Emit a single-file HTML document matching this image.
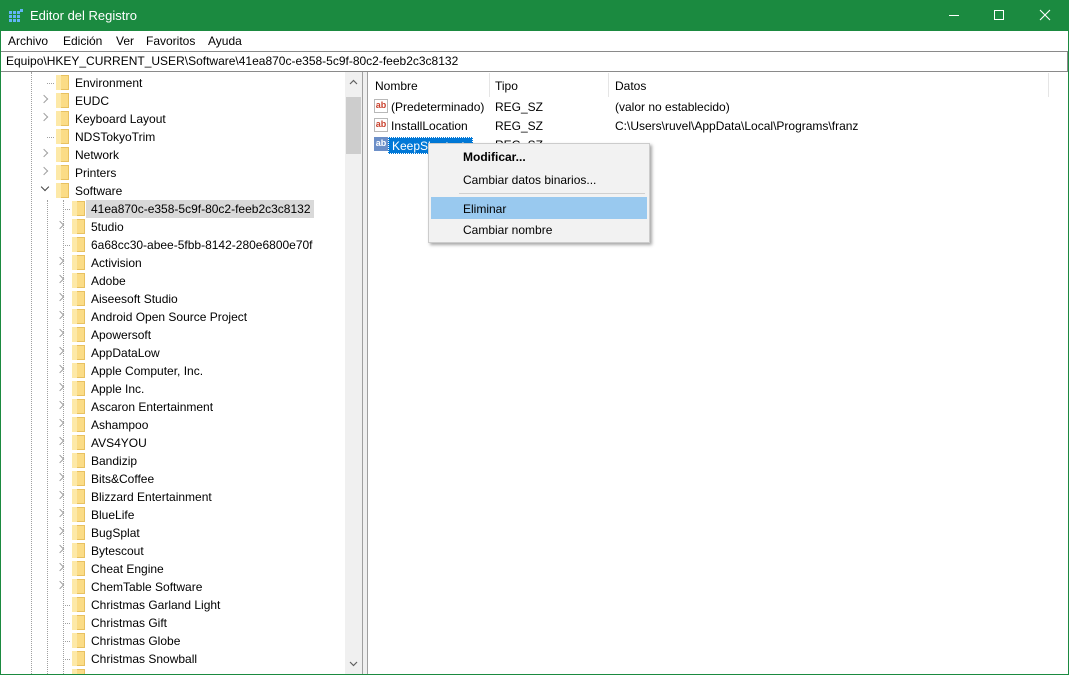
<!DOCTYPE html>
<html><head><meta charset="utf-8"><style>
*{margin:0;padding:0;box-sizing:border-box}
body{width:1069px;height:675px;overflow:hidden;background:#fff;font-family:"Liberation Sans",sans-serif;font-size:12px;color:#000;position:relative}
.abs{position:absolute}
#title{left:0;top:0;width:1069px;height:31px;background:#1b8a40;color:#fff;font-size:13px}
#menu{left:1px;top:31px;width:1067px;height:20px;background:#fff}
#menu span{position:absolute;top:3px}
#addr{left:1px;top:51px;width:1067px;height:21px;border:1px solid #8a8a8a;border-left:none;background:#fff;padding:2px 0 0 5px}
.row{position:absolute;height:18px;line-height:18px;white-space:nowrap}
.fold{position:absolute;width:13px;height:15px;background:#fbdc86;border:1px solid #e8c160;top:1px}
.fold:before{content:"";position:absolute;left:-1px;top:-1px;width:5px;height:15px;background:#fde9a8}
.arr{position:absolute;top:4px;width:6px;height:6px;border-right:1.3px solid #a0a0a0;border-bottom:1.3px solid #a0a0a0;transform:rotate(-45deg)}
.dn{transform:rotate(45deg);top:2px;border-color:#444}
.vd{position:absolute;width:0;border-left:1px dotted #a0a0a0}
.hd{position:absolute;height:0;width:7px;border-top:1px dotted #a0a0a0;top:9px}
.ab{position:absolute;width:14px;height:14px;border:1px solid #b8b8b8;background:#fff;color:#c8402c;font-size:9px;font-weight:bold;line-height:11px;text-align:center}
</style></head><body>
<div id="title" class="abs">
 <svg class="abs" style="left:9px;top:9px" width="14" height="14"><g fill="#62b5f6"><rect x="0" y="2" width="3" height="3"/><rect x="4" y="2" width="3" height="3"/><rect x="8" y="2" width="3" height="3"/><rect x="0" y="6" width="3" height="3"/><rect x="4" y="6" width="3" height="3"/><rect x="8" y="6" width="3" height="3"/><rect x="0" y="10" width="3" height="3"/><rect x="4" y="10" width="3" height="3"/><rect x="8" y="10" width="3" height="3"/><rect x="11" y="0" width="3" height="3"/></g></svg>
 <span class="abs" style="left:30px;top:8px">Editor del Registro</span>
 <div class="abs" style="left:949px;top:15px;width:10px;height:1px;background:#fff"></div>
 <div class="abs" style="left:994px;top:10px;width:10px;height:10px;border:1px solid #fff"></div>
 <svg class="abs" style="left:1039px;top:9px" width="12" height="12"><path d="M1 1L11 11M11 1L1 11" stroke="#fff" stroke-width="1.1"/></svg>
</div>
<div class="abs" style="left:0;top:31px;width:1px;height:644px;background:#1b8a40"></div>
<div class="abs" style="left:1068px;top:31px;width:1px;height:644px;background:#1b8a40"></div>
<div class="abs" style="left:0;top:674px;width:1069px;height:1px;background:#1b8a40"></div>
<div id="menu" class="abs"><span style="left:7px">Archivo</span><span style="left:62px">Edición</span><span style="left:115px">Ver</span><span style="left:145px">Favoritos</span><span style="left:207px">Ayuda</span></div>
<div id="addr" class="abs">Equipo\HKEY_CURRENT_USER\Software\41ea870c-e358-5c9f-80c2-feeb2c3c8132</div>

<div class="abs" style="left:1px;top:72px;width:344px;height:602px;overflow:hidden">
<div class="vd" style="left:30px;top:0;height:602px"></div>
<div class="vd" style="left:46px;top:128px;height:474px"></div>
<div class="vd" style="left:62px;top:128px;height:474px"></div>
</div>
<div id="tree" class="abs" style="left:0;top:74px;width:345px;height:600px;overflow:hidden"></div>

<div class="abs" style="left:345px;top:72px;width:17px;height:602px;background:#f0f0f0"></div>
<svg class="abs" style="left:349px;top:79px" width="9" height="6"><path d="M1 5L4.5 1.5L8 5" stroke="#606060" fill="none" stroke-width="1.2"/></svg>
<div class="abs" style="left:346px;top:97px;width:15px;height:57px;background:#cdcdcd"></div>
<svg class="abs" style="left:349px;top:661px" width="9" height="6"><path d="M1 1L4.5 4.5L8 1" stroke="#606060" fill="none" stroke-width="1.2"/></svg>
<div class="abs" style="left:362px;top:72px;width:6px;height:602px;background:#f0f0f0;border-left:1px solid #a0a0a0;border-right:1px solid #a0a0a0"></div>

<span class="abs" style="left:375px;top:79px">Nombre</span>
<span class="abs" style="left:495px;top:79px">Tipo</span>
<span class="abs" style="left:615px;top:79px">Datos</span>
<div class="abs" style="left:489px;top:73px;width:1px;height:24px;background:#e5e5e5"></div>
<div class="abs" style="left:608px;top:73px;width:1px;height:24px;background:#e5e5e5"></div>
<div class="abs" style="left:1048px;top:73px;width:1px;height:24px;background:#e5e5e5"></div>

<div class="ab" style="left:374px;top:99px">ab</div>
<span class="abs" style="left:391px;top:100px">(Predeterminado)</span><span class="abs" style="left:495px;top:100px">REG_SZ</span><span class="abs" style="left:615px;top:100px">(valor no establecido)</span>
<div class="ab" style="left:374px;top:118px">ab</div>
<span class="abs" style="left:391px;top:119px">InstallLocation</span><span class="abs" style="left:495px;top:119px">REG_SZ</span><span class="abs" style="left:615px;top:119px">C:\Users\ruvel\AppData\Local\Programs\franz</span>
<div class="ab" style="left:374px;top:137px;color:#fff;background:#6c8fc8;border-color:#6c8fc8">ab</div>
<div class="abs" style="left:388px;top:137px;width:85px;height:17px;background:#0078d7;color:#fff;padding:1px 0 0 3px;border:1px dotted #fff">KeepShortcuts</div>
<span class="abs" style="left:495px;top:138px">REG_SZ</span>

<div class="abs" style="left:428px;top:143px;width:222px;height:100px;background:#f2f2f2;border:1px solid #ccc;box-shadow:2px 2px 3px rgba(0,0,0,.35)">
 <span class="abs" style="left:34px;top:6px;font-weight:bold">Modificar...</span>
 <span class="abs" style="left:34px;top:29px">Cambiar datos binarios...</span>
 <div class="abs" style="left:30px;top:49px;width:186px;height:1px;background:#d0d0d0"></div>
 <div class="abs" style="left:2px;top:53px;width:216px;height:22px;background:#99c9ef"></div>
 <span class="abs" style="left:34px;top:58px">Eliminar</span>
 <span class="abs" style="left:34px;top:79px">Cambiar nombre</span>
</div>

<script>
var items=[["Environment",1,0],["EUDC",1,1],["Keyboard Layout",1,1],["NDSTokyoTrim",1,0],["Network",1,1],["Printers",1,1],["Software",1,2],
["41ea870c-e358-5c9f-80c2-feeb2c3c8132",2,0],["5tudio",2,1],["6a68cc30-abee-5fbb-8142-280e6800e70f",2,0],["Activision",2,1],["Adobe",2,1],["Aiseesoft Studio",2,1],["Android Open Source Project",2,1],["Apowersoft",2,1],["AppDataLow",2,1],["Apple Computer, Inc.",2,1],["Apple Inc.",2,1],["Ascaron Entertainment",2,1],["Ashampoo",2,1],["AVS4YOU",2,1],["Bandizip",2,1],["Bits&Coffee",2,1],["Blizzard Entertainment",2,1],["BlueLife",2,1],["BugSplat",2,1],["Bytescout",2,1],["Cheat Engine",2,1],["ChemTable Software",2,1],["Christmas Garland Light",2,0],["Christmas Gift",2,0],["Christmas Globe",2,0],["Christmas Snowball",2,0],["",2,0]];
var h="";items.forEach(function(it,i){var t=18*i,o=it[1]==1?0:16;
h+='<div class="row" style="left:0;top:'+t+'px;width:345px">';
if(it[2]==0)h+='<div class="hd" style="left:'+(47+o)+'px"></div>';
else if(it[2]==1)h+='<div class="arr" style="left:'+(41+o)+'px"></div>';
else h+='<div class="arr dn" style="left:'+(42+o)+'px"></div>';
if(i==7)h+='<div style="position:absolute;left:86px;top:0;width:228px;height:18px;background:#d9d9d9"></div>';
h+='<div class="fold" style="left:'+(56+o)+'px"></div><span style="position:absolute;left:'+(75+o)+'px">'+it[0].replace("&","&amp;")+'</span></div>';});
document.getElementById("tree").innerHTML=h;
</script>
</body></html>
